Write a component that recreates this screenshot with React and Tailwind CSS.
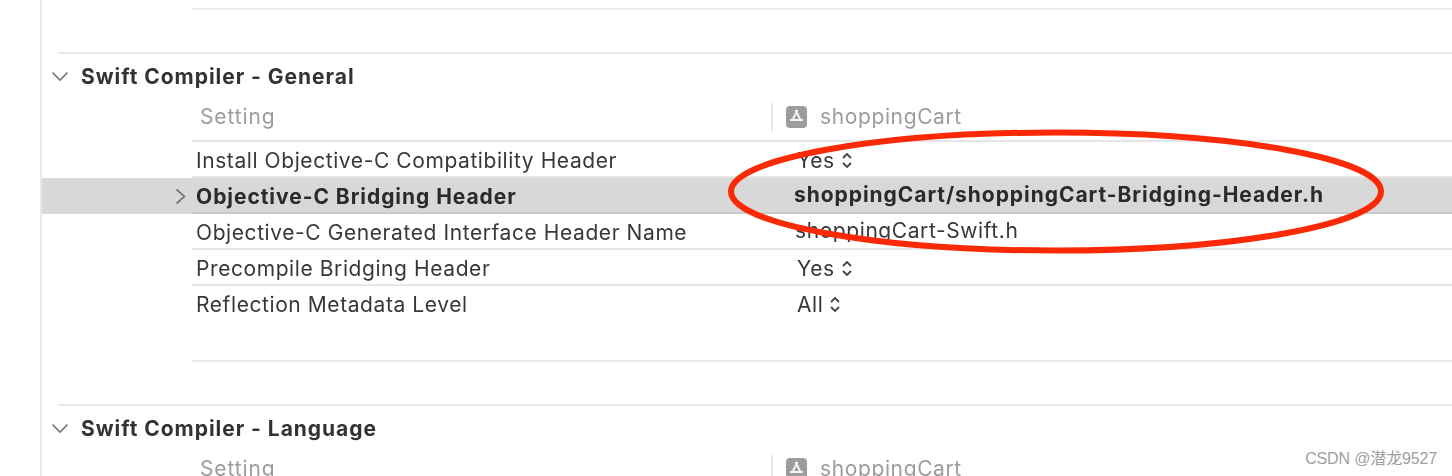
const FONT = "font-['Inter','Noto_Sans_CJK_SC',sans-serif]"

function Disclosure() {
  return (
    <svg width="18" height="11" viewBox="0 0 18 11" fill="none" stroke="#777777" strokeWidth="1.7">
      <path d="M1.5 1.5 L9 9 L16.5 1.5" />
    </svg>
  )
}

function Stepper() {
  return (
    <svg width="12" height="17" viewBox="0 0 12 17" fill="none" stroke="#444" strokeWidth="1.8" className="ml-[6px]">
      <path d="M2 6 L6 2 L10 6" />
      <path d="M2 11 L6 15 L10 11" />
    </svg>
  )
}

function AppIcon() {
  return (
    <svg width="21" height="22" viewBox="0 0 21 22" className="mr-[13px]">
      <rect x="0" y="0" width="21" height="22" rx="4" fill="#9c9c9c" />
      <path d="M11.5 4 L6 15 M9.5 4 L15 15 M4 14 L17 14" stroke="#f2f2f2" strokeWidth="2" fill="none" />
    </svg>
  )
}

function Row({ label, value, stepper, selected, last, valueUp }) {
  return (
    <div className={`flex h-9 ${selected ? 'bg-[#d8d8d8] font-bold text-[#2a2a2a] tracking-[0.95px]' : 'text-[#383838] tracking-[0.58px]'}`}>
      <div className="w-[150px] shrink-0 flex items-center justify-end pr-[6px]">
        {selected && (
          <svg width="11" height="17" viewBox="0 0 11 17" fill="none" stroke="#777" strokeWidth="1.7">
            <path d="M1.5 1.5 L9.5 8.5 L1.5 15.5" />
          </svg>
        )}
      </div>
      <div className={`flex flex-1 pl-[4px] ${last ? '' : selected ? 'border-b-2 border-[#c9c9c9]' : 'border-b-2 border-[#e6e6e6]'}`}>
        <div className={`${selected ? 'w-[598px]' : valueUp ? 'w-[599px]' : 'w-[601px]'} shrink-0 flex items-center ${last ? 'pt-[1px]' : 'pt-[2px]'}`}>{label}</div>
        <div className={`flex items-center ${valueUp ? 'pb-[2px]' : last ? 'pt-[1px]' : 'pt-[2px]'}`}>
          {value}
          {stepper && <Stepper />}
        </div>
      </div>
    </div>
  )
}

function ColumnHeader() {
  return (
    <div className="flex h-[46px] ml-[150px] pb-[3px] border-b-2 border-[#e6e6e6] text-[#9c9c9c] tracking-[0.62px]">
      <div className="w-[579px] shrink-0 flex items-center pl-[8px] tracking-[0.9px]">Setting</div>
      <div className="flex items-center">
        <div className="w-[2px] h-[28px] bg-[#e8e8e8] mr-[13px]" />
        <AppIcon />
        shoppingCart
      </div>
    </div>
  )
}

function SectionTitle({ children }) {
  return (
    <div className="flex items-center h-[44px] pt-[2px] ml-[16px] border-t-2 border-[#e8e8e8]">
      <div className="w-[29px] -ml-[7px] mr-[1px] flex">
        <Disclosure />
      </div>
      <span className="font-bold text-[#333333] tracking-[0.96px]">{children}</span>
    </div>
  )
}

export default function App() {
  return (
    <div className={`relative w-[1452px] h-[476px] overflow-hidden bg-white text-[21px] leading-none ${FONT}`}>
      <div className="ml-[40px] h-full border-l-2 border-[#e8e8e8] blur-[0.7px]">
        <div className="h-[10px] ml-[150px] border-b-2 border-[#ececec]" />
        <div className="h-[42px]" />
        <SectionTitle>Swift Compiler - General</SectionTitle>
        <ColumnHeader />
        <Row label="Install Objective-C Compatibility Header" value="Yes" stepper />
        <Row label="Objective-C Bridging Header" value="shoppingCart/shoppingCart-Bridging-Header.h" selected valueUp />
        <Row label="Objective-C Generated Interface Header Name" value="shoppingCart-Swift.h" valueUp />
        <Row label="Precompile Bridging Header" value="Yes" stepper />
        <Row label="Reflection Metadata Level" value="All" stepper last />
        <div className="h-[40px] ml-[150px] border-b-2 border-[#e8e8e8]" />
        <div className="h-[42px]" />
        <SectionTitle>Swift Compiler - Language</SectionTitle>
        <ColumnHeader />
      </div>
      <svg className="absolute left-0 top-0" width="1452" height="476" viewBox="0 0 1452 476" fill="none">
        <ellipse cx="1056" cy="191.5" rx="325" ry="59" stroke="#fb2a05" strokeWidth="6" />
      </svg>
      <span className="absolute right-[15px] top-[451px] text-[16px] tracking-[-0.15px] text-[#a0a0a0] font-['Liberation_Sans','Noto_Sans_CJK_SC',sans-serif]">
        CSDN @潜龙9527
      </span>
    </div>
  )
}
